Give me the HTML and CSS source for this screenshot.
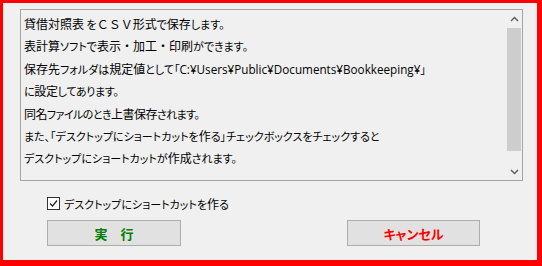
FILE: index.html
```html
<!DOCTYPE html>
<html lang="ja">
<head>
<meta charset="utf-8">
<link rel="stylesheet" href="styles.css">
</head>
<body>
<div class="frame">
  <div class="dialog">
    <div class="textbox">
      <div class="text">
        <p><span class="k">貸借対照表</span> を<span class="np">ＣＳＶ</span><span class="k">形式</span>で<span class="k">保存</span>します。</p>
        <p><span class="k">表計算</span>ソフトで<span class="k">表示</span><span class="np">・</span><span class="k">加工</span><span class="np">・</span><span class="k">印刷</span>ができます。</p>
        <p><span class="k">保存先</span>フォルダは<span class="k">規定値</span>として「<span class="lat">C:¥Users¥Public¥Documents¥Bookkeeping¥</span>」</p>
        <p class="tight">に<span class="k">設定</span>してあります。</p>
        <p class="tighter"><span class="k">同名</span>ファイルのとき<span class="k">上書保存</span>されます。</p>
        <p>また、「デスクトップにショートカットを<span class="k">作</span>る」チェックボックスをチェックすると</p>
        <p>デスクトップにショートカットが<span class="k">作成</span>されます。</p>
      </div>
      <div class="scrollbar">
        <div class="arrow">
          <svg width="9" height="6" viewBox="0 0 9 6"><path d="M1 5 L4.5 1.5 L8 5" fill="none" stroke="#606060" stroke-width="1.5"/></svg>
        </div>
        <div class="track"><div class="thumb"></div></div>
        <div class="arrow">
          <svg width="9" height="6" viewBox="0 0 9 6"><path d="M1 1 L4.5 4.5 L8 1" fill="none" stroke="#606060" stroke-width="1.5"/></svg>
        </div>
      </div>
    </div>
    <label class="check">
      <span class="box">
        <svg width="11" height="11" viewBox="0 0 11 11"><path d="M2 5.5 L4.5 8 L9 2.5" fill="none" stroke="#222" stroke-width="1.2"/></svg>
      </span>
      <span class="label">デスクトップにショートカットを<span class="k">作</span>る</span>
    </label>
    <div class="buttons">
      <div class="btn ok">実　行</div>
      <div class="btn cancel">キャンセル</div>
    </div>
  </div>
</div>
</body>
</html>
```
FILE: styles.css
```css
html, body {
  margin: 0;
  padding: 0;
  background: #f0f0f0;
}
.frame {
  width: 542px;
  height: 266px;
  box-sizing: border-box;
  border-style: solid;
  border-color: #ff0000;
  border-width: 3px 5px 6px 3px;
  background: #f0f0f0;
}
.dialog {
  display: flex;
  flex-direction: column;
  padding: 6px 0 0 17px;
  font-family: "Noto Sans CJK JP", "Noto Sans", sans-serif;
  font-size: 11px;
  font-feature-settings: "palt";
  color: #000;
}
.k {
  font-size: 12px;
}
.np {
  font-size: 12px;
  font-feature-settings: normal;
}
.lat {
  font-family: "Open Sans", "Noto Sans", sans-serif;
  font-size: 11.7px;
}
.textbox {
  width: 503px;
  height: 172px;
  box-sizing: border-box;
  border: 1px solid #a5a5a5;
  background: #f0f0f0;
  display: flex;
}
.text {
  flex: 1;
  padding: 3px 0 0 3px;
}
.text p {
  margin: 0;
  height: 22.4px;
  line-height: 22.4px;
  white-space: nowrap;
}
.text p.tight {
  letter-spacing: -0.3px;
}
.text p.tighter {
  letter-spacing: -0.55px;
}
.scrollbar {
  width: 16px;
  display: flex;
  flex-direction: column;
  background: #f0f0f0;
}
.arrow {
  height: 17px;
  display: flex;
  align-items: center;
  justify-content: center;
}
.track {
  flex: 1;
  padding: 1px 1px 0 1px;
}
.thumb {
  height: 123px;
  background: #cdcdcd;
}
.check {
  display: flex;
  align-items: center;
  margin: 16px 0 0 27px;
  height: 13px;
}
.box {
  width: 11px;
  height: 11px;
  border: 1px solid #333;
  background: #fff;
  display: flex;
  align-items: center;
  justify-content: center;
}
.label {
  margin-left: 4px;
  line-height: 13px;
}
.buttons {
  display: flex;
  margin: 10px 0 0 27px;
}
.btn {
  height: 26px;
  box-sizing: border-box;
  border: 1px solid #adadad;
  background: #e1e1e1;
  display: flex;
  align-items: center;
  justify-content: center;
  font-weight: bold;
  font-size: 13px;
}
.ok {
  width: 134px;
  color: #008000;
}
.cancel {
  width: 133px;
  margin-left: 166px;
  color: #ff0000;
}
```
